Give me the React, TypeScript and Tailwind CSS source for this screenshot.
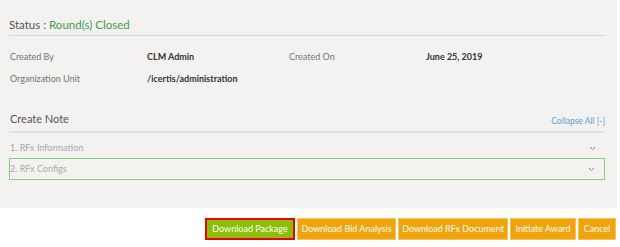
const font = { fontFamily: 'Lato, "Noto Sans", sans-serif' };

function Field({ label, value }: { label: string; value: string }) {
  return (
    <>
      <div className="w-[137px] text-[#757575]">{label}</div>
      <div className="w-[142px] font-bold text-[#333]">{value}</div>
    </>
  );
}

function Chevron() {
  return (
    <svg width="7" height="5" viewBox="0 0 7 5" className="text-[#8a8a8a]">
      <path d="M1 1 L3.5 3.5 L6 1" fill="none" stroke="currentColor" strokeWidth="1" />
    </svg>
  );
}

const orange = 'h-[22px] border border-[#f6c25a] bg-[#f0a30a] text-center';

export default function App() {
  return (
    <div className="w-[620px] h-[247px] bg-white text-[9px]" style={font}>
      <div className="w-[617px] h-[208px] bg-[#f3f2f1] pl-[9px] pr-[12px] pt-[16px]">
        <div className="h-[20px] border-b border-[#d6d6d6] text-[11.5px] leading-[18px] text-[#555]">
          Status : <span className="text-[#3c9a4e]">Round(s) Closed</span>
        </div>

        <div className="pl-px pt-[14px] leading-[14px]">
          <div className="flex h-[22px]">
            <Field label="Created By" value="CLM Admin" />
            <Field label="Created On" value="June 25, 2019" />
          </div>
          <div className="flex h-[21px]">
            <Field label="Organization Unit" value="/icertis/administration" />
          </div>
        </div>

        <div className="mt-[17px] flex items-end justify-between border-b-2 border-[#e2e1e0] pb-[3px] pl-px">
          <span className="text-[11px] leading-[18px] text-[#555]">Create Note</span>
          <span className="text-[8.5px] leading-[14px] text-[#5b9bd5]">Collapse All [-]</span>
        </div>

        <div className="flex h-[25px] items-center justify-between pl-px pr-[9px] pt-[5px] text-[#a8a8a8]">
          <span>1. RFx Information</span>
          <Chevron />
        </div>
        <div className="flex h-[22px] items-center justify-between border border-[#7fcf86] pr-[9px] text-[#a8a8a8]">
          <span>2. RFx Configs</span>
          <Chevron />
        </div>
      </div>

      <div className="flex justify-end gap-[2px] pr-[4px] pt-[10px] text-[9px] text-white">
        <div className="border-2 border-[#e8000b]">
          <button className="h-[18px] w-[86px] bg-[#8cbe07] text-center leading-[18px]">Download Package</button>
        </div>
        <button className={`${orange} w-[99px]`}>Download Bid Analysis</button>
        <button className={`${orange} w-[110px]`}>Download RFx Document</button>
        <button className={`${orange} w-[66px]`}>Initiate Award</button>
        <button className={`${orange} w-[38px]`}>Cancel</button>
      </div>
    </div>
  );
}
